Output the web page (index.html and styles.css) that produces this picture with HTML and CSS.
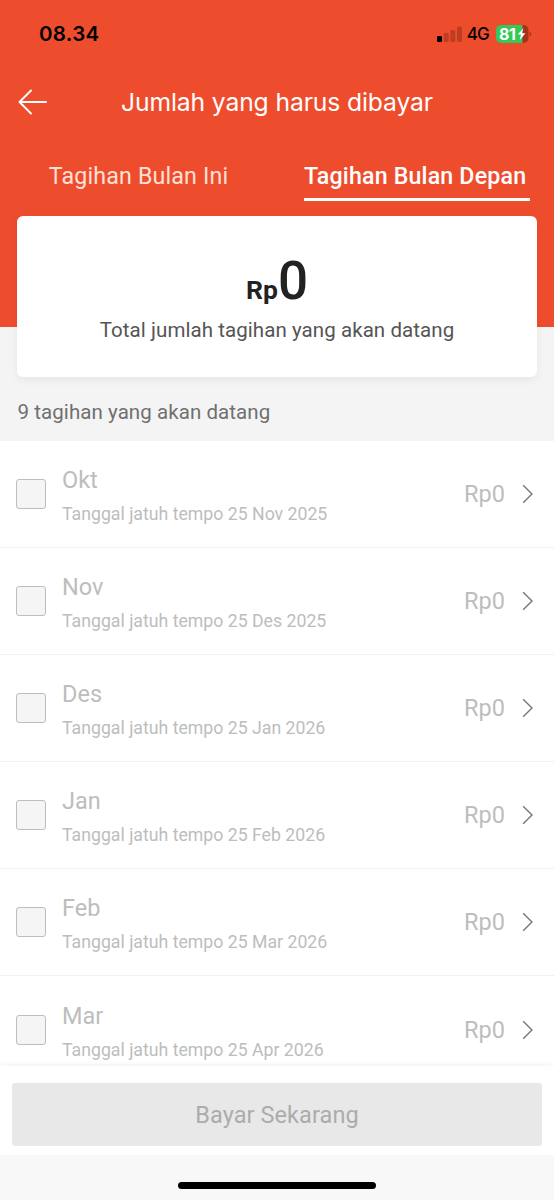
FILE: index.html
```html
<!DOCTYPE html>
<html lang="id">
<head>
<meta charset="utf-8">
<meta name="viewport" content="width=device-width, initial-scale=1">
<title>Jumlah yang harus dibayar</title>
<link rel="stylesheet" href="styles.css">
</head>
<body>
<div class="screen">
  <header class="header">
    <div class="status">
      <span class="time">08.34</span>
      <div class="status-icons">
        <svg class="signal" width="25" height="16" viewBox="0 0 25 16">
          <rect x="0" y="10" width="5" height="6" rx="1.2" fill="#000"/>
          <g fill="#be3e23"><rect x="6.7" y="7" width="5" height="9" rx="1.2"/><rect x="13.3" y="4" width="5" height="12" rx="1.2"/><rect x="20" y="0.5" width="5" height="15.5" rx="1.2"/></g>
        </svg>
        <span class="network">4G</span>
        <div class="battery">
          <svg width="36" height="18" viewBox="0 0 36 18">
            <path d="M26 0h1.500a5 5 0 0 1 5 5v8a5 5 0 0 1-5 5H26z" fill="#a5331c"/>
            <path d="M5 0h21.500v18H5a5 5 0 0 1-5-5V5a5 5 0 0 1 5-5z" fill="#34c759"/>
            <path d="M33.600 6.500q1.700.8 1.700 2.500t-1.700 2.500z" fill="#a5331c"/>
            <path d="M27.300 3.300 21.800 9.600h3.200l-1.300 5.700 5.700-7h-3.400z" fill="#fff"/>
          </svg>
          <span class="battery-level">81</span>
        </div>
      </div>
    </div>
    <div class="titlebar">
      <svg class="back" width="30" height="26" viewBox="0 0 30 26" fill="none" stroke="#fff" stroke-width="1.900" stroke-linecap="round" stroke-linejoin="round"><path d="M13 1.500 1.500 13 13 24.500M1.500 13H28"/></svg>
      <h1 class="title">Jumlah yang harus dibayar</h1>
    </div>
    <nav class="tabs">
      <a class="tab">Tagihan Bulan Ini</a>
      <a class="tab tab-active">Tagihan Bulan Depan</a>
    </nav>
  </header>
  <section class="card">
    <div class="amount"><span class="currency">Rp</span><span class="value">0</span></div>
    <p class="caption">Total jumlah tagihan yang akan datang</p>
  </section>
  <h2 class="section-label">9 tagihan yang akan datang</h2>
  <main class="list">
    <div class="row"><span class="checkbox"></span><div class="info"><div class="month">Okt</div><div class="due">Tanggal jatuh tempo 25 Nov 2025</div></div><span class="price">Rp0</span><svg class="chevron" viewBox="0 0 12 20"><path d="M1.200 1.200 10 10 1.200 18.800"/></svg></div>
    <div class="row"><span class="checkbox"></span><div class="info"><div class="month">Nov</div><div class="due">Tanggal jatuh tempo 25 Des 2025</div></div><span class="price">Rp0</span><svg class="chevron" viewBox="0 0 12 20"><path d="M1.200 1.200 10 10 1.200 18.800"/></svg></div>
    <div class="row"><span class="checkbox"></span><div class="info"><div class="month">Des</div><div class="due">Tanggal jatuh tempo 25 Jan 2026</div></div><span class="price">Rp0</span><svg class="chevron" viewBox="0 0 12 20"><path d="M1.200 1.200 10 10 1.200 18.800"/></svg></div>
    <div class="row"><span class="checkbox"></span><div class="info"><div class="month">Jan</div><div class="due">Tanggal jatuh tempo 25 Feb 2026</div></div><span class="price">Rp0</span><svg class="chevron" viewBox="0 0 12 20"><path d="M1.200 1.200 10 10 1.200 18.800"/></svg></div>
    <div class="row"><span class="checkbox"></span><div class="info"><div class="month">Feb</div><div class="due">Tanggal jatuh tempo 25 Mar 2026</div></div><span class="price">Rp0</span><svg class="chevron" viewBox="0 0 12 20"><path d="M1.200 1.200 10 10 1.200 18.800"/></svg></div>
    <div class="row"><span class="checkbox"></span><div class="info"><div class="month">Mar</div><div class="due">Tanggal jatuh tempo 25 Apr 2026</div></div><span class="price">Rp0</span><svg class="chevron" viewBox="0 0 12 20"><path d="M1.200 1.200 10 10 1.200 18.800"/></svg></div>
  </main>
  <footer class="footer"><button class="pay" disabled>Bayar Sekarang</button></footer>
  <div class="home"><span class="home-bar"></span></div>
</div>
</body>
</html>
```
FILE: styles.css
```css
* { box-sizing: border-box; }
body { margin: 0; font-family: Roboto, "Liberation Sans", sans-serif; background: #f4f4f4; }
.screen { display: flex; flex-direction: column; width: 554px; height: 1200px; overflow: hidden; background: #f4f4f4; }
.header { flex: none; height: 327px; background: #ee4d2d; color: #fff; }

.status { display: flex; justify-content: space-between; align-items: center; height: 67px; padding: 0 22px 0 39px; color: #000; font-family: Inter, sans-serif; }
.time { font-size: 20.500px; font-weight: 600; letter-spacing: 0.3px; }
.status-icons { display: flex; align-items: center; }
.network { margin: 0 7px 0 5px; font-size: 17px; font-weight: 500; letter-spacing: -0.8px; }
.battery { position: relative; display: flex; }
.battery-level { position: absolute; left: 3px; top: 0; line-height: 18px; font-size: 16px; font-weight: 700; letter-spacing: -0.3px; color: #fff; }

.titlebar { display: flex; align-items: center; height: 70px; padding-left: 18px; }
.back { flex: none; }
.title { margin: 0 0 0 73px; font-family: Inter, sans-serif; font-size: 24.700px; font-weight: 400; letter-spacing: -0.130px; line-height: 30px; white-space: nowrap; }

.tabs { display: flex; height: 64px; }
.tab { width: 277px; padding-top: 24px; text-align: center; font-size: 23.200px; line-height: 30px; letter-spacing: 0.180px; color: #ffe0d6; white-space: nowrap; }
.tab-active { width: 226px; margin-left: 27px; text-align: left; font-weight: 500; color: #fff; border-bottom: 3px solid #fff; }

.card { flex: none; height: 161px; margin: -111px 17px 0; padding-top: 37px; border-radius: 6px; background: #fff; box-shadow: 0 3px 8px rgba(0,0,0,.06); text-align: center; }
.amount { display: flex; justify-content: center; align-items: baseline; height: 61px; line-height: 56px; color: #222; }
.currency { font-size: 26.500px; font-weight: 700; }
.value { font-size: 53px; font-weight: 500; }
.caption { margin: 3px 0 0; font-size: 20.500px; line-height: 26px; letter-spacing: 0.070px; color: #555; }

.section-label { flex: none; margin: 0; height: 64px; padding: 23px 17.500px 0; font-size: 20.500px; font-weight: 400; line-height: 24px; letter-spacing: 0.070px; color: #707070; }

.list { flex: none; height: 625px; overflow: hidden; background: #fff; }
.row { display: flex; align-items: center; height: 107.100px; padding: 0 20px 0 16px; border-bottom: 1.500px solid #f1f1f1; }
.checkbox { flex: none; width: 30px; height: 30px; border: 1.500px solid #bdbdbd; border-radius: 3px; background: #f5f5f5; }
.info { flex: 1; margin-left: 16px; padding-top: 4px; color: #bdbdbd; }
.month { font-size: 23.500px; line-height: 32px; }
.due { margin-top: 4px; font-size: 17.700px; line-height: 28px; }
.price { font-size: 23.500px; color: #bdbdbd; }
.chevron { width: 12px; height: 20px; margin-left: 17px; fill: none; stroke: #777; stroke-width: 1.400; }

.footer { position: relative; flex: none; height: 89px; padding: 17px 12px 0; background: #fff; box-shadow: 0 -1px 5px rgba(0,0,0,.06); }
.pay { display: block; width: 100%; height: 63px; padding: 0; border: 0; border-radius: 3px; background: #e8e8e8; color: #acacac; font-family: inherit; font-size: 23.500px; letter-spacing: 0.080px; }
.home { position: relative; flex: 1; display: flex; justify-content: center; padding-top: 27px; background: #f8f8f8; }
.home-bar { width: 198px; height: 7px; border-radius: 4px; background: #000; }
```
